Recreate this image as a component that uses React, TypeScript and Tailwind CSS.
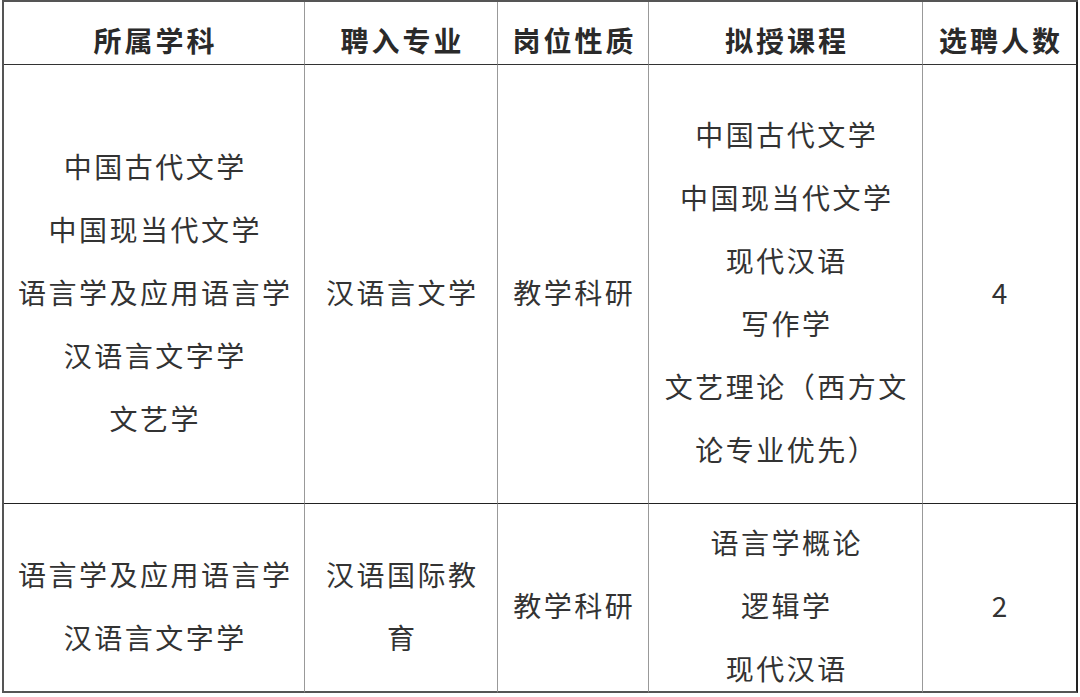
const font = { fontFamily: '"Noto Sans CJK SC", "Noto Sans", sans-serif' };

const headers = ['所属学科', '聘入专业', '岗位性质', '拟授课程', '选聘人数'];

const rows = [
  {
    h: 'h-[439px]',
    cells: [
      ['中国古代文学', '中国现当代文学', '语言学及应用语言学', '汉语言文字学', '文艺学'],
      ['汉语言文学'],
      ['教学科研'],
      ['中国古代文学', '中国现当代文学', '现代汉语', '写作学', '文艺理论（西方文', '论专业优先）'],
      ['4'],
    ],
  },
  {
    h: 'h-[189px]',
    cells: [
      ['语言学及应用语言学', '汉语言文字学'],
      ['汉语国际教', '育'],
      ['教学科研'],
      ['语言学概论', '逻辑学', '现代汉语'],
      ['2'],
    ],
  },
];

export default function App() {
  return (
    <div className="h-[697px] w-[1080px] bg-white pl-[2px]" style={font}>
      <div className="grid w-[1076px] grid-cols-[301px_193px_151px_274px_155px] border-l-2 border-t-2 border-[#555]">
        {headers.map((t, i) => (
          <div
            key={t}
            className={`flex h-[63px] items-center justify-center border-b-[1.5px] border-[#333] pt-[14px] text-[28px] font-semibold tracking-[3px] text-[#2a2a2a] ${
              i === 4 ? 'border-r-2 border-r-[#222]' : 'border-r border-r-[#999]'
            }`}
          >
            <span className="pl-[3px]">{t}</span>
          </div>
        ))}
        {rows.map((row, ri) =>
          row.cells.map((lines, ci) => (
            <div
              key={`${ri}-${ci}`}
              className={`flex ${row.h} flex-col items-center justify-center pt-[16px] text-[28px] leading-[63px] tracking-[2.5px] text-[#333] ${
                ri === 1 ? 'border-b-2 border-[#555]' : 'border-b-[1.5px] border-[#222]'
              } ${ci === 4 ? 'border-r-2 border-r-[#222]' : 'border-r border-r-[#999]'}`}
            >
              {lines.map((l) => (
                <span key={l} className="pl-[2.5px]">
                  {l}
                </span>
              ))}
            </div>
          ))
        )}
      </div>
    </div>
  );
}
